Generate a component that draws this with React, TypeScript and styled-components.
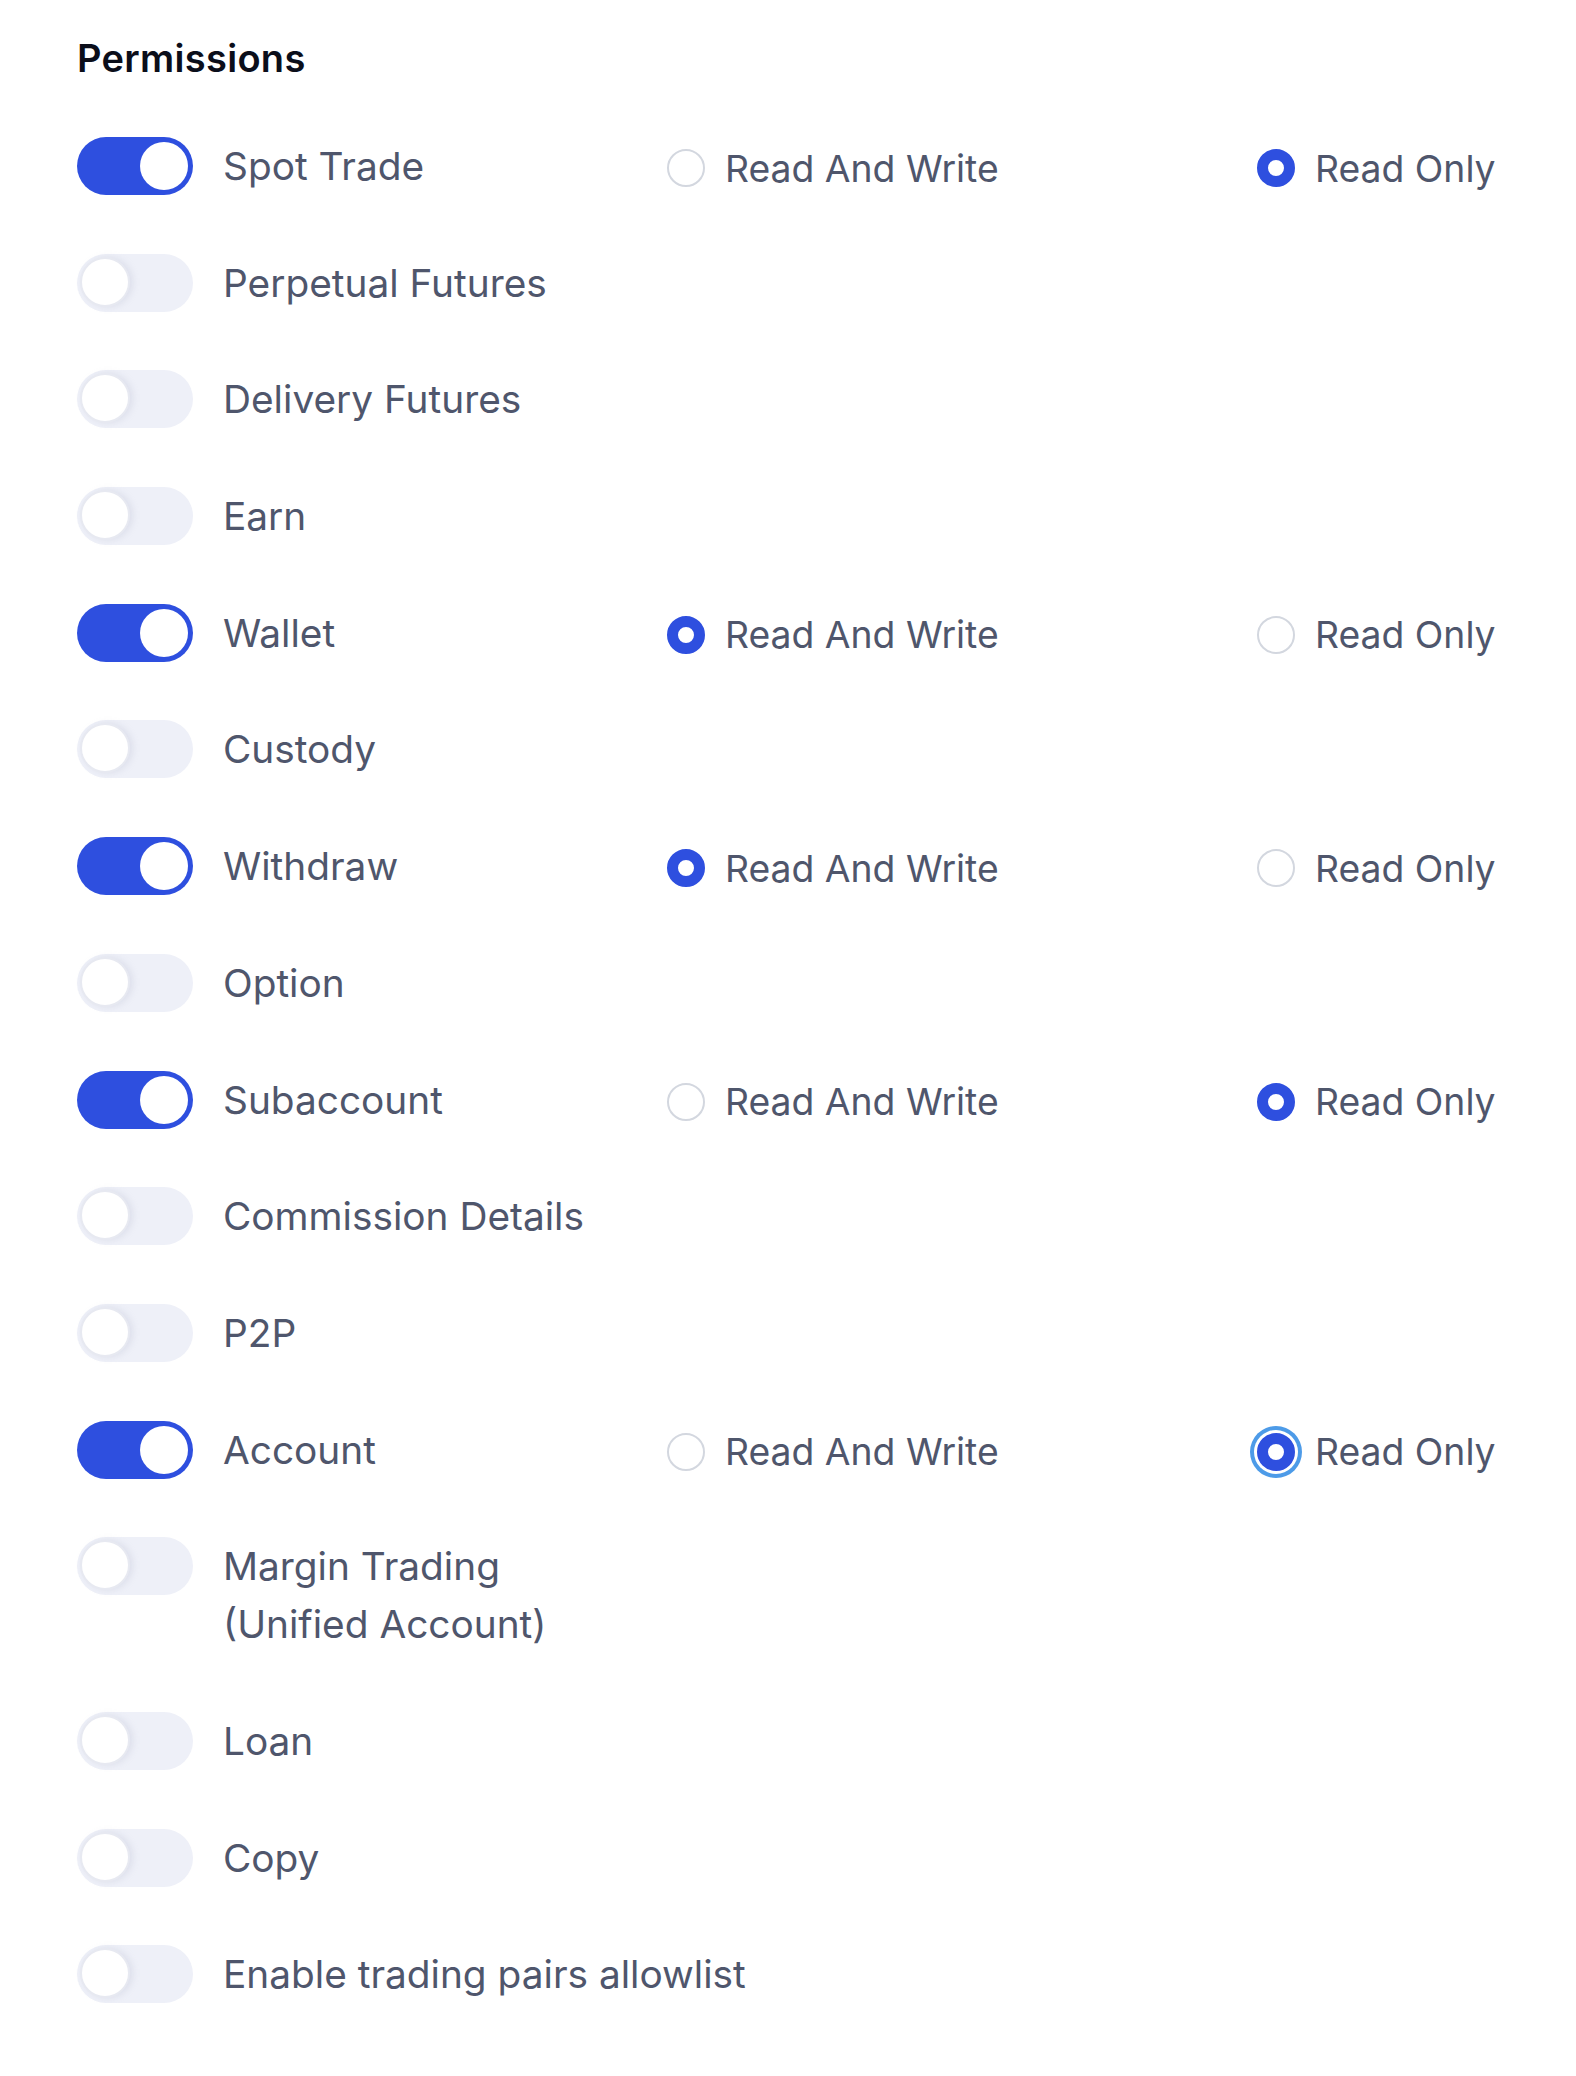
import React, { useState } from "react";
import styled, { createGlobalStyle } from "styled-components";

const GlobalStyle = createGlobalStyle`
  body {
    margin: 0;
    background: #ffffff;
    font-family: Inter, "Noto Sans", "Liberation Sans", sans-serif;
  }
`;

const Page = styled.div`
  padding: 36px 0 0 77px;
`;

const Title = styled.h2`
  margin: 0 0 57px;
  font-size: 38px;
  line-height: 44px;
  font-weight: 600;
  color: #0b0e1a;
  letter-spacing: 0.3px;
`;

const List = styled.div`
  display: flex;
  flex-direction: column;
  gap: 58.7px;
`;

const Row = styled.div`
  display: flex;
  align-items: flex-start;
`;

const Track = styled.button<{ $on: boolean }>`
  position: relative;
  flex: 0 0 116px;
  width: 116px;
  height: 58px;
  padding: 0;
  margin-right: 30px;
  border: none;
  border-radius: 29px;
  background: ${(p) => (p.$on ? "#2e4fdf" : "#eef0f8")};
  cursor: pointer;
`;

const Knob = styled.span<{ $on: boolean }>`
  position: absolute;
  top: ${(p) => (p.$on ? "5px" : "3px")};
  left: ${(p) => (p.$on ? "63px" : "3px")};
  width: ${(p) => (p.$on ? "48px" : "50px")};
  height: ${(p) => (p.$on ? "48px" : "50px")};
  box-sizing: border-box;
  border-radius: 50%;
  background: #ffffff;
  border: ${(p) => (p.$on ? "none" : "2px solid #e7e9f1")};
  box-shadow: ${(p) => (p.$on ? "none" : "3px 0 6px rgba(170, 176, 200, 0.25)")};
`;

const Label = styled.div<{ $fixed: boolean }>`
  flex: ${(p) => (p.$fixed ? "0 0 444px" : "0 1 auto")};
  font-size: 38.8px;
  line-height: 58px;
  color: #4f566c;
  white-space: nowrap;
`;

const Options = styled.div`
  position: relative;
  top: 2px;
  display: grid;
  grid-template-columns: 590px auto;
  height: 58px;
  align-items: center;
`;

const Option = styled.label`
  display: flex;
  align-items: center;
  gap: 20px;
  font-size: 37.3px;
  color: #4f566c;
  cursor: pointer;
`;

const Dot = styled.span<{ $checked: boolean; $focus?: boolean }>`
  flex: 0 0 38px;
  width: 38px;
  height: 38px;
  box-sizing: border-box;
  border-radius: 50%;
  border: ${(p) => (p.$checked ? "11px solid #2e4fdf" : "2px solid #d3d7df")};
  background: #ffffff;
  box-shadow: ${(p) => (p.$focus ? "0 0 0 3px #ffffff, 0 0 0 7px #4d9be8" : "none")};
`;

type Access = "rw" | "ro";

interface Permission {
  name: React.ReactNode;
  on: boolean;
  access?: Access;
  focus?: boolean;
}

const initial: Permission[] = [
  { name: "Spot Trade", on: true, access: "ro" },
  { name: "Perpetual Futures", on: false },
  { name: "Delivery Futures", on: false },
  { name: "Earn", on: false },
  { name: "Wallet", on: true, access: "rw" },
  { name: "Custody", on: false },
  { name: "Withdraw", on: true, access: "rw" },
  { name: "Option", on: false },
  { name: "Subaccount", on: true, access: "ro" },
  { name: "Commission Details", on: false },
  { name: "P2P", on: false },
  { name: "Account", on: true, access: "ro", focus: true },
  {
    name: (
      <>
        Margin Trading
        <br />
        (Unified Account)
      </>
    ),
    on: false,
  },
  { name: "Loan", on: false },
  { name: "Copy", on: false },
  { name: "Enable trading pairs allowlist", on: false },
];

const App = () => {
  const [items, setItems] = useState(initial);

  const toggle = (i: number) =>
    setItems((prev) =>
      prev.map((it, idx) =>
        idx === i ? { ...it, on: !it.on, access: it.access || "ro" } : it
      )
    );

  const pick = (i: number, access: Access) =>
    setItems((prev) => prev.map((it, idx) => (idx === i ? { ...it, access } : it)));

  return (
    <Page>
      <GlobalStyle />
      <Title>Permissions</Title>
      <List>
        {items.map((it, i) => (
          <Row key={i}>
            <Track $on={it.on} onClick={() => toggle(i)}>
              <Knob $on={it.on} />
            </Track>
            <Label $fixed={it.on}>{it.name}</Label>
            {it.on && (
              <Options>
                <Option onClick={() => pick(i, "rw")}>
                  <Dot $checked={it.access === "rw"} />
                  Read And Write
                </Option>
                <Option onClick={() => pick(i, "ro")}>
                  <Dot $checked={it.access === "ro"} $focus={it.focus} />
                  Read Only
                </Option>
              </Options>
            )}
          </Row>
        ))}
      </List>
    </Page>
  );
};

export default App;
